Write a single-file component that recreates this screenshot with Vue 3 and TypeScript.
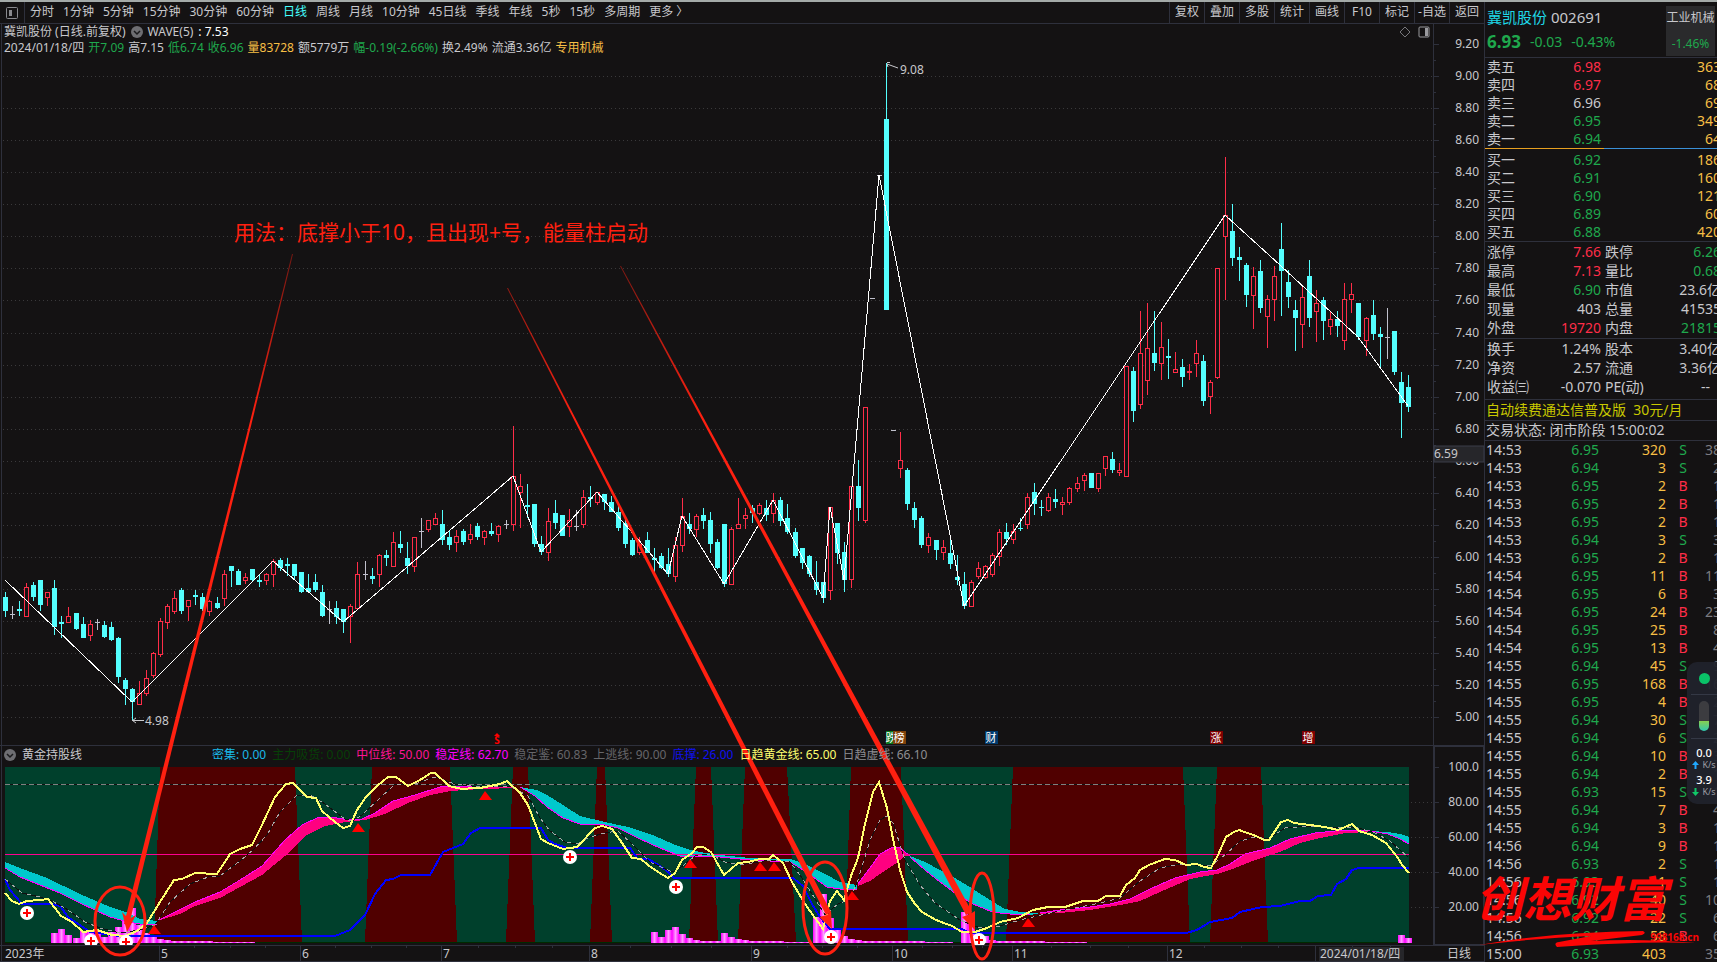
<script setup lang="ts">
type Kind = 'r' | 'c' | 'w'
interface Candle { x: number; high: number; top: number; bottom: number; low: number; kind: Kind }

const periods = ['分时', '1分钟', '5分钟', '15分钟', '30分钟', '60分钟', '日线', '周线', '月线', '10分钟', '45日线', '季线', '年线', '5秒', '15秒', '多周期', '更多 〉']
const tools = ['复权', '叠加', '多股', '统计', '画线', 'F10', '标记', '-自选', '返回']

const quote = [
  { text: '2024/01/18/四', cls: 'plain' }, { text: '开7.09', cls: 'down' }, { text: '高7.15', cls: 'plain' },
  { text: '低6.74', cls: 'down' }, { text: '收6.96', cls: 'down' }, { text: '量83728', cls: 'gold' },
  { text: '额5779万', cls: 'plain' }, { text: '幅-0.19(-2.66%)', cls: 'down' }, { text: '换2.49%', cls: 'plain' },
  { text: '流通3.36亿', cls: 'plain' }, { text: '专用机械', cls: 'gold' },
]

const legend = [
  { text: '密集: 0.00', cls: 'l-cyan' }, { text: '主力吸货: 0.00', cls: 'l-dark' }, { text: '中位线: 50.00', cls: 'l-pink' },
  { text: '稳定线: 62.70', cls: 'l-magenta' }, { text: '稳定鉴: 60.83', cls: 'l-gray' }, { text: '上逃线: 90.00', cls: 'l-gray' },
  { text: '底撑: 26.00', cls: 'l-blue' }, { text: '日趋黄金线: 65.00', cls: 'l-yellow' }, { text: '日趋虚线: 66.10', cls: 'l-silver' },
]

const priceTicks = Array.from({ length: 22 }, (_, i) => ({ y: Math.round(44 + i * 32.06), label: (9.2 - i * 0.2).toFixed(2) }))
const minorTicks = Array.from({ length: 21 }, (_, i) => Math.round(60 + i * 32.06))
const oscTicks = [
  { y: 767, label: '100.0' }, { y: 802, label: '80.00' }, { y: 837, label: '60.00' }, { y: 872, label: '40.00' }, { y: 907, label: '20.00' },
]

// x, high, body top, body bottom, low, kind (r: rising, c: falling, w: unchanged)
const rows = `5 592 597 611 617 c;12 606 614 615 619 w;19 601 609 611 616 c;26 583 587 617 617 r;33 582 585 597 601 c;40 580 580 605 611 c;47 592 592 598 606 r
54 580 588 627 635 c;61 616 622 624 638 c;68 607 616 623 623 r;76 613 613 629 630 c;83 617 624 638 638 c;90 620 624 636 641 r;97 619 622 623 630 w
104 621 625 637 638 c;111 622 627 640 641 c;118 637 638 677 683 c;125 678 680 689 705 c;132 688 689 702 720 c;139 681 693 705 705 r;146 670 678 694 696 r
153 652 653 676 678 r;160 618 621 655 657 r;167 604 606 623 629 r;174 591 598 612 614 r;181 588 590 611 614 c;188 600 600 607 621 r;195 590 595 597 605 c
202 593 597 609 611 c;209 600 601 612 616 r;217 597 603 608 609 c;224 570 574 599 606 r;231 566 566 571 587 c;238 569 571 585 585 c;245 573 577 581 584 r
252 569 569 580 582 c;259 574 580 582 587 c;266 573 574 581 585 r;273 559 561 575 587 r;280 558 560 568 571 c;287 558 564 566 576 c;294 564 564 576 580 c
301 572 572 592 593 c;308 574 588 592 592 c;315 574 582 590 592 c;322 585 592 616 617 c;329 601 609 610 624 w;336 601 608 617 624 c;343 609 609 622 633 c
350 604 606 617 643 r;357 562 574 609 609 r;365 561 574 575 580 w;372 568 576 579 584 c;379 554 555 575 587 r;386 550 555 558 566 c;393 532 542 567 567 r
400 531 544 548 553 c;407 542 558 566 574 c;414 537 537 567 572 r;421 518 531 532 548 w;428 520 520 530 532 r;435 513 518 525 525 r;442 510 524 540 545 c
449 531 537 545 550 c;456 530 536 543 552 r;463 529 531 542 545 c;470 524 534 540 544 r;477 523 526 537 540 c;484 530 531 538 545 r;491 523 531 534 536 c
498 525 526 535 542 r;506 520 524 525 529 w;513 426 476 525 531 r;520 474 486 493 528 r;527 484 505 507 518 c;534 504 504 544 547 c;541 536 544 552 555 c
548 508 521 553 561 r;555 500 513 523 529 c;562 515 515 536 536 c;569 509 520 527 537 r;576 510 526 527 531 w;583 490 497 525 528 r;590 486 497 499 507 c
597 492 492 503 505 r;604 494 494 502 510 c;611 496 502 512 512 c;618 504 512 528 531 c;625 518 523 544 548 c;632 538 540 555 556 c;639 537 544 553 555 r
647 532 540 553 553 c;654 548 558 560 574 c;661 553 556 568 569 c;668 548 564 574 577 c;675 537 545 577 582 r;682 498 516 546 552 r;689 513 524 529 534 c
696 514 516 530 537 r;703 508 515 521 529 c;710 512 520 544 553 c;717 539 542 568 569 c;724 524 524 584 587 c;731 527 529 585 585 r;738 498 524 529 529 r
745 508 515 519 529 r;752 505 508 513 523 c;759 503 505 514 515 r;766 500 508 515 521 c;773 493 500 514 523 r;780 497 500 521 526 c;787 504 518 532 534 c
795 528 532 556 558 c;802 548 548 563 569 c;809 555 556 574 577 c;816 561 582 590 595 c;823 582 582 598 603 c;830 507 507 591 600 r;837 523 523 553 564 c
844 542 552 580 592 c;851 486 486 580 588 r;858 460 486 508 521 c;865 407 407 521 523 r;872 298 298 299 299 w;879 175 175 176 176 w;886 63 119 310 310 c
893 430 430 431 431 w;900 432 460 469 478 r;907 468 470 504 510 c;914 502 508 520 528 c;921 516 518 545 548 c;928 533 537 546 553 r;936 540 540 550 560 c
943 540 547 553 560 r;950 539 553 564 569 c;957 555 577 580 585 c;964 572 584 606 609 c;971 580 582 607 607 r;978 562 568 577 579 r;985 565 566 578 579 r
992 553 555 575 577 r;999 529 532 557 566 r;1006 523 532 539 545 c;1013 524 531 540 544 r;1020 518 528 529 531 c;1027 493 497 525 529 r;1034 483 492 504 515 c
1041 500 507 508 516 c;1048 493 497 511 512 r;1055 489 499 502 508 c;1062 497 502 505 515 r;1069 487 488 503 505 r;1077 477 483 489 492 r;1084 473 475 481 491 r
1091 473 473 488 488 c;1098 473 473 489 492 r;1105 456 456 469 476 r;1112 452 459 470 473 c;1119 463 470 473 476 r;1126 366 366 477 477 r;1133 367 371 411 422 c
1140 311 353 405 409 r;1147 303 348 381 395 r;1154 311 353 363 371 c;1161 322 347 364 380 r;1168 339 356 358 379 c;1175 352 369 373 373 r;1182 359 367 377 387 c
1189 364 371 373 380 r;1196 340 353 364 377 r;1203 355 361 401 406 c;1210 380 382 397 414 r;1217 268 268 378 379 r;1225 157 215 237 300 r;1232 204 231 258 266 c
1239 247 257 260 281 c;1246 263 265 295 307 c;1253 267 276 296 329 r;1260 260 271 308 313 c;1267 295 299 317 348 r;1274 266 276 300 321 r;1281 223 249 271 316 c
1288 270 282 297 308 c;1295 300 310 318 351 c;1302 286 297 325 348 r;1309 260 276 318 327 c;1316 290 303 312 342 r;1323 297 300 321 340 c;1330 312 319 327 335 r
1337 311 319 326 337 c;1344 283 299 341 350 r;1351 283 294 300 313 r;1358 303 303 337 340 c;1366 317 318 341 356 r;1373 300 315 334 340 c;1380 327 334 337 369 c
1387 308 337 338 359 w;1394 331 331 372 375 c;1401 372 382 403 438 c;1408 375 387 407 412 c`

const candles: Candle[] = rows.split(/[;\n]/).map((row) => {
  const p = row.trim().split(' ')
  return { x: +p[0], high: +p[1], top: +p[2], bottom: +p[3], low: +p[4], kind: p[5] as Kind }
})

const wave = '5,580 132,702 273,561 343,622 513,476 541,552 597,492 668,574 682,516 724,584 773,500 823,598 830,507 844,580 879,175 964,606 1225,215 1281,266 1358,337 1408,406'

const redBands = [
  '160,767 295,767 302,942 154,942', '372,767 450,767 457,942 365,942', '513,767 528,767 535,942 506,942',
  '597,767 605,767 612,942 590,942', '696,767 711,767 718,942 689,942', '745,767 787,767 796,942 738,942',
  '851,767 901,767 908,942 845,942', '1013,767 1183,767 1190,942 1006,942', '1217,767 1261,767 1268,942 1210,942',
]

const ribbons = [
  { cls: 'rib-cyan', fast: '157,924 140,924 128,922 110,917 80,903 60,893 40,885 20,877 5,868', slow: '5,862 20,868 47,878 80,894 110,907 128,913 140,919 157,921' },
  { cls: 'rib-pink', fast: '157,921 195,902 220,892 240,880 262,866 285,840 302,825 317,818 330,817 350,820 362,819 375,813 393,801 415,795 440,787 460,786 480,786 510,787', slow: '518,788 480,789 450,791 430,795 408,803 385,814 365,820 345,822 325,826 305,836 285,856 262,875 240,887 220,898 195,906 180,914 157,921' },
  { cls: 'rib-cyan', fast: '857,889 840,889 827,887 813,877 800,868 790,862 750,860 720,857 700,856 680,856 660,848 640,839 618,828 605,825 580,824 563,818 547,807 535,796 520,787', slow: '520,787 537,790 547,795 563,805 580,816 605,822 628,827 655,836 673,844 690,850 700,852 720,855 750,858 790,859 805,864 813,868 827,875 840,882 857,885' },
  { cls: 'rib-pink', fast: '858,884 870,868 880,854 893,847 900,848 910,856', slow: '905,856 895,864 880,874 870,881 858,886' },
  { cls: 'rib-cyan', fast: '1030,915 1010,914 1000,913 990,911 973,904 955,893 940,882 925,870 910,857', slow: '910,856 925,862 940,870 955,878 973,889 990,900 1005,909 1020,912 1040,913' },
  { cls: 'rib-pink', fast: '1040,913 1060,910 1090,907 1110,904 1130,899 1150,889 1175,878 1200,872 1217,870 1230,864 1245,854 1270,848 1290,839 1315,833 1345,830 1370,831', slow: '1370,832 1345,833 1320,838 1300,843 1280,852 1255,860 1235,868 1217,874 1190,879 1160,892 1140,901 1120,905 1090,910 1060,913 1040,914' },
  { cls: 'rib-cyan', fast: '1409,844 1400,839 1388,834 1370,831', slow: '1370,831 1388,832 1400,834 1409,837' },
]

const goldLine = '5,893 12,901 19,904 27,901 40,900 48,899 61,916 72,922 83,932 97,930 112,935 125,936 137,931 147,923 160,902 174,880 182,879 195,873 217,874 230,854 240,849 252,845 262,825 275,797 286,784 293,783 307,797 316,798 322,811 335,822 343,828 350,826 357,810 366,797 377,786 388,777 396,777 408,786 420,780 431,773 435,773 449,786 462,789 475,788 480,788 500,784 507,781 520,793 528,805 541,839 548,843 563,849 577,847 595,828 602,826 612,829 620,840 632,858 641,859 648,865 658,872 668,878 675,873 682,860 692,853 697,847 703,847 711,852 724,875 738,863 748,862 760,859 769,859 773,855 783,863 792,882 805,904 823,929 830,901 837,891 844,900 851,876 858,858 865,824 873,792 879,782 887,808 893,839 900,870 907,892 915,904 922,912 936,920 952,926 962,932 975,932 987,928 1000,922 1018,918 1033,910 1048,907 1065,907 1083,901 1098,901 1106,896 1120,896 1126,885 1135,878 1140,870 1149,865 1154,863 1165,859 1175,860 1186,865 1197,864 1204,867 1211,868 1218,855 1226,837 1234,832 1239,830 1256,836 1264,840 1269,840 1281,822 1288,820 1294,823 1310,825 1325,827 1338,830 1352,824 1359,831 1372,835 1386,843 1398,858 1402,865 1409,873'
const supportLine = '5,879 10,890 22,904 52,904 60,906 68,917 90,932 120,936 335,936 350,930 365,915 375,894 386,880 393,879 401,875 430,875 443,852 463,844 471,833 480,828 541,828 548,840 555,844 567,848 630,848 638,859 648,859 660,866 667,871 674,878 793,878 803,886 812,904 820,917 830,929 962,929 970,933 1186,933 1197,930 1210,922 1232,918 1240,912 1262,907 1280,906 1300,901 1310,901 1318,896 1331,895 1337,884 1346,879 1352,870 1359,868 1409,868'
const dashLine = '5,879 22,893 40,897 50,900 65,908 85,922 100,928 120,933 140,930 155,925 170,902 190,884 208,877 220,876 240,861 253,850 267,835 280,812 297,795 310,795 322,802 345,819 352,821 362,815 380,798 395,784 415,784 435,777 455,784 480,787 510,786 528,796 540,818 550,831 565,842 577,844 590,837 605,833 618,831 632,844 650,862 672,872 680,868 695,856 710,854 725,862 740,865 770,860 790,862 800,875 812,894 825,915 838,904 850,899 858,880 870,840 880,820 887,816 893,823 905,860 920,885 935,903 960,920 980,928 1000,926 1020,920 1050,913 1100,903 1120,898 1140,881 1160,868 1180,864 1210,866 1225,855 1240,841 1255,837 1268,839 1285,828 1310,826 1340,828 1355,827 1375,833 1390,841 1400,850 1408,857'

const energy: number[][] = [
  [51, 933], [58, 929], [65, 935], [73, 938], [80, 931], [87, 932], [94, 930], [101, 937], [108, 932], [115, 927], [122, 920], [129, 908], [136, 925],
  [143, 933], [150, 937], [157, 939], [164, 940], [171, 941], [178, 941], [185, 941], [192, 941], [199, 941], [206, 941], [213, 942], [220, 942], [227, 942], [234, 942], [241, 942], [248, 942],
  [651, 932], [658, 937], [665, 930], [672, 927], [679, 934], [686, 938], [693, 940], [700, 941], [707, 941], [714, 941], [721, 933], [728, 937], [735, 939], [742, 940],
  [749, 941], [756, 941], [763, 941], [770, 941], [777, 941], [784, 942], [791, 942], [798, 942], [805, 942], [813, 917], [820, 894], [827, 918], [834, 930], [841, 936], [848, 939], [855, 940],
  [862, 941], [869, 941], [876, 941], [883, 941], [890, 941], [897, 941], [904, 941], [911, 941], [918, 941], [925, 942], [932, 942], [939, 942], [946, 942],
  [961, 912], [968, 920], [975, 933], [982, 936], [989, 940], [996, 941], [1003, 941], [1010, 941], [1017, 941], [1024, 941], [1031, 941], [1038, 941], [1045, 942], [1052, 942], [1059, 942], [1066, 942], [1073, 942], [1080, 942],
  [1398, 935], [1405, 938],
]
const pluses = [[27, 913], [91, 941], [126, 942], [570, 857], [676, 887], [831, 937], [979, 940]]
const triangles = [[154, 925], [358, 823], [485, 791], [690, 859], [760, 862], [774, 862], [852, 891], [1028, 918]]

const months = [
  { x: 159, label: '5' }, { x: 300, label: '6' }, { x: 441, label: '7' }, { x: 589, label: '8' }, { x: 751, label: '9' },
  { x: 892, label: '10' }, { x: 1012, label: '11' }, { x: 1167, label: '12' }, { x: 1315, label: '' },
]
const weekTicks = [194, 230, 265, 335, 371, 406, 478, 515, 552, 630, 671, 711, 787, 822, 857, 922, 952, 982, 1051, 1090, 1128, 1204, 1241, 1278, 1352, 1390]
const marks = [
  { x: 985, label: '财', cls: 'm-blue' }, { x: 1210, label: '涨', cls: 'm-red' }, { x: 1302, label: '增', cls: 'm-red' },
]

const sells = [
  ['卖五', '6.98', '363', 'up'], ['卖四', '6.97', '68', 'up'], ['卖三', '6.96', '69', 'plain'], ['卖二', '6.95', '349', 'down'], ['卖一', '6.94', '64', 'down'],
]
const buys = [
  ['买一', '6.92', '186', 'down'], ['买二', '6.91', '160', 'down'], ['买三', '6.90', '121', 'down'], ['买四', '6.89', '60', 'down'], ['买五', '6.88', '420', 'down'],
]
const stats = [
  ['涨停', '7.66', 'up', '跌停', '6.26', 'down'], ['最高', '7.13', 'up', '量比', '0.68', 'down'], ['最低', '6.90', 'down', '市值', '23.6亿', 'plain'],
  ['现量', '403', 'plain', '总量', '41535', 'plain'], ['外盘', '19720', 'up', '内盘', '21815', 'down'],
]
const basics = [
  ['换手', '1.24%', 'plain', '股本', '3.40亿', 'plain'], ['净资', '2.57', 'plain', '流通', '3.36亿', 'plain'], ['收益㈢', '-0.070', 'plain', 'PE(动)', '--\u00a0\u00a0\u00a0', 'plain'],
]
const trades = `14:53 6.95 320 S 38;14:53 6.94 3 S 2;14:53 6.95 2 B 1;14:53 6.95 2 B 1;14:53 6.95 2 B 1;14:53 6.94 3 S 3;14:53 6.95 2 B 1
14:54 6.95 11 B 11;14:54 6.95 6 B 3;14:54 6.95 24 B 23;14:54 6.95 25 B 8;14:54 6.95 13 B 4
14:55 6.94 45 S 9;14:55 6.95 168 B 16;14:55 6.95 4 B 2;14:55 6.94 30 S 7;14:55 6.94 6 S 2;14:55 6.94 10 B 3;14:55 6.94 2 B 1;14:55 6.93 15 S 1;14:55 6.94 7 B 4;14:55 6.94 3 B 1
14:56 6.94 9 B 1;14:56 6.93 2 S 1;14:56 6.93 1 S 1;14:56 6.92 40 S 10;14:56 6.92 22 S 6;14:56 6.94 58 B 6;15:00 6.93 403 - 35`
  .split(/[;\n]/).map((t) => t.trim().split(' '))
</script>

<template>
  <div class="terminal">
    <section class="left">
      <nav class="toolbar">
        <button class="layout-btn" aria-label="侧栏">
          <svg width="14" height="14" viewBox="0 0 14 14"><rect x="1.500" y="1.500" width="11" height="11" rx="1" fill="none" stroke="#8a8a8e" /><rect x="4" y="4" width="3" height="6" fill="#8a8a8e" /></svg>
        </button>
        <div class="periods">
          <button v-for="p in periods" :key="p" :class="{ active: p === '日线' }">{{ p }}</button>
        </div>
        <div class="tools">
          <button v-for="t in tools" :key="t">{{ t }}</button>
        </div>
      </nav>

      <div class="stage">
        <svg class="plot" viewBox="0 24 1484 938" preserveAspectRatio="none">
          <defs>
            <linearGradient id="bar"><stop offset="0" stop-color="#f0f" /><stop offset="0.5" stop-color="#ff9dff" /><stop offset="1" stop-color="#f0f" /></linearGradient>
            <linearGradient id="shaft" gradientUnits="userSpaceOnUse" x1="0" y1="250" x2="0" y2="420"><stop offset="0" stop-color="#ff2010" stop-opacity="0.4" /><stop offset="1" stop-color="#ff2010" /></linearGradient>
            <clipPath id="osc"><rect x="0" y="760" width="1484" height="185" /></clipPath>
          </defs>

          <g class="crisp">
            <path v-for="t in priceTicks.slice(1)" :key="'g' + t.y" class="grid" :d="`M3 ${t.y + 0.5}H1433`" />
            <path v-for="t in oscTicks.slice(1)" :key="'o' + t.y" class="grid" :d="`M1411 ${t.y + 0.5}H1433`" />
            <path class="frame" d="M1.500 24V962M0 745.500H1484M0 945.500H1484M0 961.500H1484M1433.500 24V945" />
            <path class="frame" d="M1435 746.500H1483.500V944.500H1434.500V746" />
            <path v-for="t in priceTicks" :key="'a' + t.y" class="frame" :d="`M1434 ${t.y + 0.5}h5`" />
            <path v-for="y in minorTicks" :key="'b' + y" class="frame" :d="`M1434 ${y + 0.5}h2`" />
            <path v-for="t in oscTicks" :key="'c' + t.y" class="frame" :d="`M1434 ${t.y + 0.5}h5`" />
            <path v-for="m in months" :key="'m' + m.x" class="frame" :d="`M${m.x + 0.5} 945V961`" />
            <path v-for="x in weekTicks" :key="'w' + x" class="frame" :d="`M${x + 0.5} 945v3`" />
          </g>

          <g class="crisp">
            <g v-for="k in candles" :key="k.x" :class="k.kind">
              <rect :x="k.x" :y="k.high" width="1" :height="k.low - k.high" />
              <rect v-if="k.kind !== 'r'" :x="k.x - 2" :y="k.top" width="5" :height="k.bottom - k.top" />
              <rect v-else class="hollow" :x="k.x - 1.5" :y="k.top + 0.5" width="4" :height="Math.max(1, k.bottom - k.top - 1)" />
            </g>
          </g>
          <polyline class="wave crisp" :points="wave" />

          <g class="label">
            <path class="pointer" d="M887 62.500h3M887 64l11 4M888 67l-1-3M132 720.500H144M136 718l-3.500 2.500L136 723" />
            <text x="900" y="74">9.08</text>
            <text x="145" y="725">4.98</text>
          </g>

          <g class="marks">
            <g v-for="m in marks" :key="m.x">
              <rect :class="m.cls" :x="m.x" y="731" width="13" height="13" />
              <text :x="m.x + 6" y="742">{{ m.label }}</text>
            </g>
            <rect x="886" y="731" width="8" height="13" class="m-green" />
            <text x="891" y="742">跌</text>
            <rect x="893" y="731" width="13" height="13" class="m-brown" />
            <text x="899" y="742">榜</text>
            <text x="497" y="744" class="m-dollar">S</text>
            <path d="M494 736l3-3 3 3z" fill="#f00" />
          </g>

          <g clip-path="url(#osc)">
            <g class="crisp">
              <rect x="5" y="767" width="1404" height="175" fill="#00402c" />
              <polygon v-for="b in redBands" :key="b" :points="b" fill="#500000" />
              <path d="M5 942.500H1409" stroke="#002a00" />
              <rect v-for="e in energy" :key="'e' + e[0]" :x="e[0]" :y="e[1]" width="7" :height="943 - e[1]" fill="url(#bar)" />
            </g>
            <g class="crisp">
              <g v-for="r in ribbons" :key="r.fast" :class="r.cls">
                <polygon :points="r.fast + ' ' + r.slow" />
                <polyline :points="r.fast" />
              </g>
              <path d="M5 784.500H1409" stroke="#111" />
              <path d="M5 784.500H1409" stroke="#808080" stroke-dasharray="5 3" />
              <path d="M5 854.500H1409" stroke="#ff0090" />
              <polyline class="line support" :points="supportLine" />
              <polyline class="line shade" :points="dashLine" />
              <polyline class="line dashed" :points="dashLine" />
              <polyline class="line gold-line" :points="goldLine" />
            </g>
            <path v-for="t in triangles" :key="'t' + t[0]" :d="`M${t[0]} ${t[1]}l7 9h-13z`" fill="#f00" />
            <g v-for="p in pluses" :key="'p' + p[0]">
              <circle :cx="p[0]" :cy="p[1]" r="7" fill="#fff" />
              <path :d="`M${p[0] - 4} ${p[1]}h8m-4 -4v8`" stroke="#f00" stroke-width="2" />
            </g>
          </g>

          <g class="axis">
            <text v-for="t in priceTicks" :key="t.label" x="1479" :y="t.y + 4">{{ t.label }}</text>
            <text v-for="t in oscTicks" :key="t.label" x="1479" :y="t.y + 4">{{ t.label }}</text>
          </g>
          <rect x="1434" y="446" width="50" height="16" fill="#26262a" stroke="#3a3c48" />
          <text class="small" x="1434" y="458">6.59</text>
          <g class="small">
            <text x="5" y="958">2023年</text>
            <text v-for="m in months" :key="'n' + m.x" :x="m.x + 2" y="958">{{ m.label }}</text>
            <rect x="1319" y="947" width="85" height="14" fill="#26262a" />
            <text x="1320" y="958">2024/01/18/四</text>
            <text x="1447" y="958">日线</text>
          </g>

          <g class="notes">
            <polygon class="shaft" points="292,254 293,254 129,925 124,924" />
            <polygon points="122,912 127,932 136,915 129,919" />
            <polygon class="shaft" points="507,288 508,288 831,912 826,915" />
            <polygon points="819,917 832,929 831,911 827,915" />
            <polygon class="shaft" points="620,266 621,266 972,912 966,915" />
            <polygon points="962,917 975,930 975,911 970,914" />
            <ellipse cx="120" cy="921" rx="25" ry="34" />
            <ellipse cx="825" cy="908" rx="22" ry="46" />
            <ellipse cx="982" cy="916" rx="12" ry="43" />
            <text x="234" y="240">用法：底撑小于10，且出现+号，能量柱启动</text>
          </g>
        </svg>

        <header class="chart-head">
          <div class="head-row">
            <span>冀凯股份 (日线.前复权)</span>
            <button class="drop" aria-label="指标">
              <svg width="12" height="12" viewBox="0 0 12 12"><circle cx="6" cy="6" r="6" fill="#6e6e72" /><path d="M3 5l3 3 3-3" fill="none" stroke="#1a1a1c" stroke-width="1.500" /></svg>
            </button>
            <span>WAVE(5)</span><span class="bright">: 7.53</span>
            <div class="corner">
              <button aria-label="标记"><svg width="12" height="12" viewBox="0 0 12 12"><path d="M6 1l5 5-5 5-5-5z" fill="none" stroke="#77777b" /></svg></button>
              <button aria-label="面板"><svg width="12" height="12" viewBox="0 0 12 12"><rect x="1" y="1" width="10" height="10" rx="1" fill="none" stroke="#9a9a9e" /><rect x="7" y="2" width="3" height="8" fill="#9a9a9e" /></svg></button>
            </div>
          </div>
          <div class="quote-row"><span v-for="q in quote" :key="q.text" :class="q.cls">{{ q.text }}</span></div>
        </header>

        <div class="legend">
          <button class="drop" aria-label="指标">
            <svg width="12" height="12" viewBox="0 0 12 12"><circle cx="6" cy="6" r="6" fill="#6e6e72" /><path d="M3 5l3 3 3-3" fill="none" stroke="#1a1a1c" stroke-width="1.500" /></svg>
          </button>
          <span class="legend-name">黄金持股线</span>
          <span v-for="l in legend" :key="l.text" :class="l.cls">{{ l.text }}</span>
        </div>
      </div>
    </section>

    <aside class="right">
      <header class="stock">
        <div class="stock-main">
          <div class="stock-name"><a href="#">冀凯股份</a> 002691</div>
          <div class="stock-price down"><b>6.93</b><span>-0.03</span><span>-0.43%</span></div>
        </div>
        <div class="sector"><span>工业机械</span><span class="down">-1.46%</span></div>
      </header>

      <table class="depth">
        <tbody>
          <tr v-for="s in sells" :key="s[0]"><th>{{ s[0] }}</th><td :class="s[3]">{{ s[1] }}</td><td class="gold">{{ s[2] }}</td></tr>
        </tbody>
      </table>
      <div class="split"></div>
      <table class="depth buys">
        <tbody>
          <tr v-for="s in buys" :key="s[0]"><th>{{ s[0] }}</th><td :class="s[3]">{{ s[1] }}</td><td class="gold">{{ s[2] }}</td></tr>
        </tbody>
      </table>
      <table class="stats">
        <tbody>
          <tr v-for="s in stats" :key="s[0]"><th>{{ s[0] }}</th><td :class="s[2]">{{ s[1] }}</td><th>{{ s[3] }}</th><td :class="s[5]">{{ s[4] }}</td></tr>
        </tbody>
      </table>
      <table class="stats basics">
        <tbody>
          <tr v-for="s in basics" :key="s[0]"><th>{{ s[0] }}</th><td :class="s[2]">{{ s[1] }}</td><th>{{ s[3] }}</th><td :class="s[5]">{{ s[4] }}</td></tr>
        </tbody>
      </table>
      <a class="promo" href="#">自动续费通达信普及版&nbsp; 30元/月</a>
      <div class="status">交易状态: 闭市阶段 15:00:02</div>
      <table class="trades">
        <tbody>
          <tr v-for="(t, i) in trades" :key="i">
            <td class="time">{{ t[0] }}</td><td class="down">{{ t[1] }}</td><td class="gold">{{ t[2] }}</td>
            <td class="side" :class="t[3] === 'B' ? 'up' : 'down'">{{ t[3] === '-' ? '' : t[3] }}</td><td class="count">{{ t[4] }}</td>
          </tr>
        </tbody>
      </table>
    </aside>

    <div class="monitor">
      <i class="dot"></i>
      <div class="gauge"><i></i></div>
      <div class="rate"><b>0.0</b><span><svg width="7" height="8" viewBox="0 0 7 8"><path d="M3.500 0L7 4H4.500V8H2.500V4H0z" fill="#20a8ff" /></svg> K/s</span></div>
      <div class="rate"><b>3.9</b><span><svg width="7" height="8" viewBox="0 0 7 8"><path d="M3.500 8L7 4H4.500V0H2.500V4H0z" fill="#10c868" /></svg> K/s</span></div>
    </div>

    <div class="watermark">
      <span class="brand">创想财富</span>
      <svg width="220" height="20" viewBox="0 0 220 20"><path d="M0 17Q70 4 164 3Q168 5 163 7L112 13Q160 10 217 15Q160 13 78 19Q74 15 80 14L112 8Q60 10 0 17Z" fill="#fb0505" /></svg>
      <span class="site">998168.cn</span>
    </div>
  </div>
</template>

<style>
html, body { margin: 0; background: #141213; }
</style>

<style scoped>
.terminal {
  position: relative;
  display: grid;
  grid-template-columns: minmax(0, 1fr) 232px;
  box-sizing: border-box;
  height: 100vh;
  overflow: hidden;
  border-top: 2px solid #a4aaa8;
  background: #141213;
  color: #c8c8cc;
  font: 12px/16px "Noto Sans", "Noto Sans CJK SC", sans-serif;
}
button { margin: 0; padding: 0; border: 0; background: none; color: inherit; font: inherit; white-space: nowrap; }
a { color: inherit; text-decoration: none; }
b { font-weight: 700; }
.up { color: #ff2d48; }
.down { color: #1fa84d; }
.gold { color: #f7bf45; }
.plain { color: #c8c8cc; }
.bright { color: #fff; }

.left { display: flex; flex-direction: column; min-width: 0; min-height: 0; border-right: 1px solid #2e303c; }
.toolbar { display: flex; flex: none; height: 21px; border-bottom: 1px solid #2e303c; }
.layout-btn { display: flex; align-items: center; justify-content: center; width: 25px; border-right: 1px solid #2e303c; }
.periods { display: flex; flex: 1; gap: 9px; min-width: 0; padding-left: 5px; overflow: hidden; }
.periods button { height: 19px; line-height: 19px; }
.periods .active { color: #4ff; }
.tools { display: flex; }
.tools button { width: 35px; padding-bottom: 2px; border-left: 1px solid #2e303c; box-sizing: border-box; line-height: 19px; }

.stage { display: grid; flex: 1; min-height: 0; grid-template-columns: 100%; grid-template-rows: 722fr 216fr; }
.plot { grid-area: 1 / 1 / -1 / -1; width: 100%; height: 100%; min-height: 0; }
.chart-head { grid-area: 1 / 1; z-index: 1; padding-left: 4px; }
.head-row { display: flex; align-items: center; gap: 5px; height: 16px; }
.drop { display: flex; }
.corner { display: flex; gap: 7px; margin: 0 54px 0 auto; }
.corner button { display: flex; }
.quote-row { display: flex; gap: 4px; line-height: 15px; }
.legend { grid-area: 2 / 1; z-index: 1; display: flex; align-items: center; align-self: start; gap: 6px; height: 17px; padding-left: 4px; white-space: nowrap; }
.legend-name { width: 184px; }
.l-cyan { color: #1ab8e8; }
.l-dark { color: #073f07; }
.l-pink { color: #ff1493; }
.l-magenta { color: #f0f; }
.l-gray { color: #66666a; }
.l-blue { color: #1010f0; }
.l-yellow { color: #ffff70; }
.l-silver { color: #8e8e92; }

.crisp { shape-rendering: crispEdges; }
.grid { stroke: #3a393b; stroke-dasharray: 1 3; }
.frame { fill: none; stroke: #2e303c; }
.c { fill: #54ffff; }
.w { fill: #c0c0cc; }
.r { fill: #ff2d48; }
.hollow { fill: #141213; stroke: #ff2d48; }
.wave { fill: none; stroke: #fff; }
.label text, .small { fill: #c8c8cc; font-size: 12px; }
.pointer { fill: none; stroke: #c8c8cc; }
.axis text { fill: #c8c8cc; font-size: 12px; text-anchor: end; }
.marks text { fill: #fff; font-size: 11px; text-anchor: middle; }
.m-blue { fill: #003a6e; }
.m-red { fill: #800000; }
.m-green { fill: #087a20; }
.m-brown { fill: #80420a; }
.marks .m-dollar { fill: #f00; font-size: 10px; font-weight: 700; }
.rib-cyan polygon { fill: #00c8cc; }
.rib-pink polygon { fill: #ff0080; }
.rib-cyan polyline, .rib-pink polyline { fill: none; stroke: #f0f; }
.line { fill: none; }
.support { stroke: #00f; stroke-width: 2; }
.gold-line { stroke: #ffff6e; stroke-width: 2; }
.shade { stroke: #101010; }
.dashed { stroke: #a8a8a8; stroke-dasharray: 4 5; }
.notes polygon { fill: #ff2010; }
.notes .shaft { fill: url(#shaft); }
.notes ellipse { fill: none; stroke: #ff2010; stroke-width: 3; }
.notes text { fill: #ff2010; font-size: 21px; }

.right { min-width: 0; overflow: hidden; font-size: 14px; }
.stock { display: flex; justify-content: space-between; height: 55px; border-bottom: 1px solid #2e303c; padding: 0 2px; }
.stock-name { padding-top: 4px; font-size: 15px; line-height: 22px; white-space: nowrap; }
.stock-name a { color: #1fd8e8; }
.stock-price { display: flex; align-items: center; gap: 9px; line-height: 27px; }
.stock-price b { font-size: 17px; }
.sector { display: flex; flex-direction: column; justify-content: space-between; align-items: center; width: 49px; height: 50px; margin-top: 4px; padding: 3px 0; box-sizing: border-box; background: #2a2a2c; font-size: 12px; line-height: 18px; }
table { width: calc(100% + 4px); border-collapse: collapse; table-layout: fixed; }
th, td { padding: 0; font-weight: 400; text-align: right; white-space: nowrap; }
th { text-align: left; }
.depth th { padding-left: 2px; width: 60px; }
.depth td { height: 18px; line-height: 18px; width: 54px; }
.depth td:last-child { width: auto; }
.split { height: 1px; margin: 0 0 2px; background: linear-gradient(90deg, #e8a020 119px, #3a90d8 119px); }
.buys { border-bottom: 1px solid #2e303c; }
.stats { border-bottom: 1px solid #2e303c; border-collapse: separate; border-spacing: 0; padding: 0 0 1px; }
.stats th, .stats td { height: 19px; line-height: 19px; }
.stats th { width: 48px; padding-left: 2px; }
.stats th:nth-child(3) { padding-left: 4px; }
.stats td:nth-child(2) { width: 66px; }
.basics { padding: 0 0 3px; }
.promo { display: block; height: 20px; padding-left: 1px; border-bottom: 1px solid #2e303c; color: #c8c800; line-height: 20px; }
.status { height: 19px; padding-left: 1px; border-bottom: 1px solid #2e303c; line-height: 18px; }
.trades td { height: 18px; line-height: 18px; }
.trades .time { width: 48px; padding-left: 1px; text-align: left; }
.trades td:nth-child(2) { width: 65px; }
.trades td:nth-child(3) { width: 67px; }
.trades .side { width: 34px; text-align: center; }
.trades .count { color: #7c7c80; }

.monitor {
  position: absolute; right: 0; top: 660px; display: flex; flex-direction: column; align-items: center; box-sizing: border-box;
  width: 30px; height: 142px; padding: 11px 0 0 4px; border-radius: 10px 0 0 10px; background: rgba(32, 34, 44, 0.94);
}
.dot { width: 11px; height: 11px; border-radius: 50%; background: #0ac268; }
.gauge { display: flex; justify-content: center; box-sizing: border-box; width: 26px; height: 45px; margin: 10px 0 7px; padding: 6px 0; border: solid #343845; border-width: 1px 0; }
.gauge i { width: 10px; height: 30px; border-radius: 5px; background: linear-gradient(#3c3c40 20px, #88d050 20px, #30c8b0); }
.rate { height: 27px; color: #fff; font-size: 11px; line-height: 13px; text-align: center; }
.rate b { display: block; font-weight: 500; }
.rate span { display: flex; align-items: center; gap: 3px; color: #9a9ca4; font-size: 9px; line-height: 11px; white-space: nowrap; }

.watermark { position: absolute; right: 18px; bottom: 14px; display: flex; flex-direction: column; width: 220px; color: #fb0505; }
.brand { margin-left: -4px; font-size: 48px; font-style: italic; font-weight: 700; line-height: 58px; white-space: nowrap; }
.site { position: absolute; right: 0; bottom: 5px; font-size: 10px; font-weight: 700; line-height: 12px; }
</style>
